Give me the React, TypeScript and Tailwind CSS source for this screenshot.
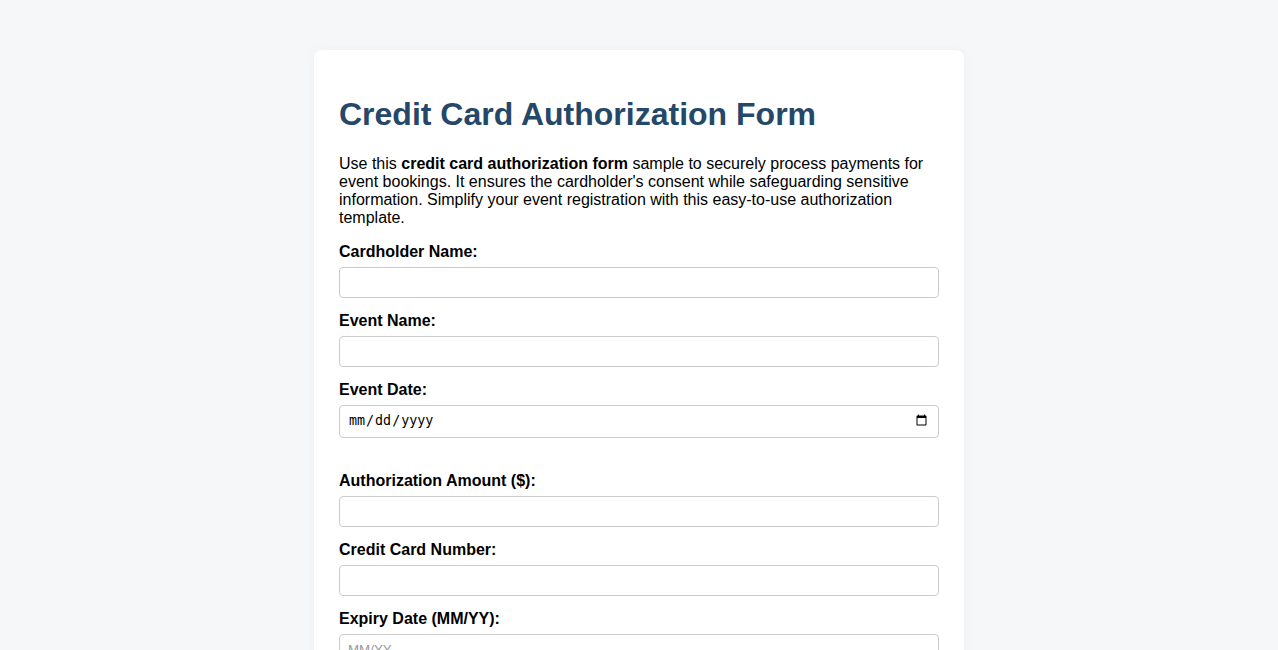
const fields = [
  { id: "name", label: "Cardholder Name:", type: "text" },
  { id: "event", label: "Event Name:", type: "text" },
];

const moreFields = [
  { id: "amount", label: "Authorization Amount ($):", type: "text" },
  { id: "card", label: "Credit Card Number:", type: "text" },
  { id: "expiry", label: "Expiry Date (MM/YY):", type: "text", placeholder: "MM/YY" },
];

type FieldProps = {
  id: string;
  label: string;
  type: string;
  placeholder?: string;
};

const Field = ({ id, label, type, placeholder }: FieldProps) => {
  return (
    <>
      <label htmlFor={id} className="block font-bold text-black mb-[6px]">
        {label}
      </label>
      <input
        id={id}
        type={type}
        placeholder={placeholder}
        className="block w-full h-[31px] px-2 mb-[14px] border border-[#ccc] rounded-[4px] text-[13.33px] bg-white placeholder:text-[#999]"
      />
    </>
  );
};

export default function App() {
  return (
    <div className="min-h-screen bg-[#f6f7f9] pt-[50px] pb-10 font-['Liberation_Sans',Arial,sans-serif] text-black">
      <div className="w-[650px] mx-auto bg-white rounded-lg px-[25px] pt-[25px] pb-6 shadow-[0_0_10px_rgba(0,0,0,0.04)]">
        <h1 className="text-[32px] leading-[36.8px] font-bold text-[#254869] my-[21.4px]">
          Credit Card Authorization Form
        </h1>
        <p className="text-base leading-[18px] mb-4">
          Use this <strong>credit card authorization form</strong> sample to securely process payments for
          event bookings. It ensures the cardholder's consent while safeguarding sensitive information.
          Simplify your event registration with this easy-to-use authorization template.
        </p>
        <form className="text-base leading-[18px]">
          {fields.map((f) => (
            <Field key={f.id} {...f} />
          ))}
          <label htmlFor="date" className="block font-bold mb-[6px]">
            Event Date:
          </label>
          <input
            id="date"
            type="date"
            className="block w-full h-[33px] px-2 mb-[34px] border border-[#ccc] rounded-[4px] text-[13.33px] font-['DejaVu_Sans_Mono',monospace] bg-white"
          />
          {moreFields.map((f) => (
            <Field key={f.id} {...f} />
          ))}
        </form>
      </div>
    </div>
  );
}
